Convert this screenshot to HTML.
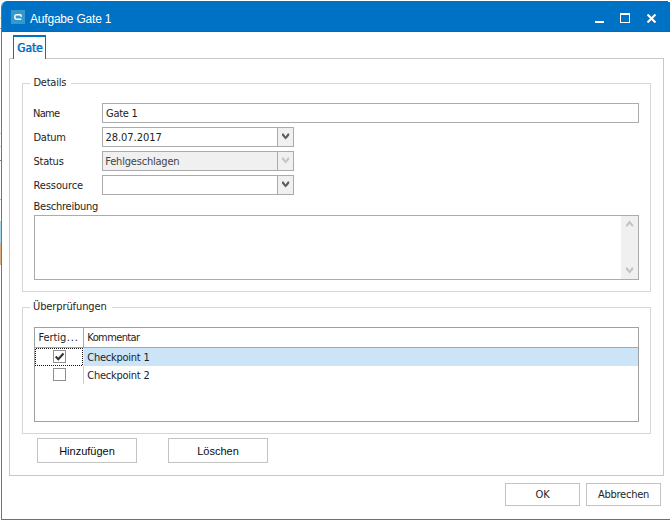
<!DOCTYPE html>
<html lang="de">
<head>
<meta charset="utf-8">
<title>Aufgabe Gate 1</title>
<style>
html,body{margin:0;padding:0;}
body{width:670px;height:520px;overflow:hidden;background:#fff;position:relative;
  font-family:"DejaVu Sans Condensed","Liberation Sans",sans-serif;font-size:11px;color:#1e1e1e;letter-spacing:-0.25px;}
*{box-sizing:border-box;}
.abs{position:absolute;}
.win{position:absolute;left:1px;top:1px;width:680px;height:519px;border-left:1px solid #4580b9;border-bottom:1px solid #3f7cb8;border-top-left-radius:6px;overflow:hidden;background:#fff;}
.title{position:absolute;left:-1px;top:0;width:681px;height:31px;background:#0072c6;border-bottom:1px solid #006bbd;}
.title .cap{font-family:"Liberation Sans",sans-serif;position:absolute;left:29px;top:10px;font-size:12px;line-height:16px;color:#fff;white-space:nowrap;letter-spacing:-0.2px;}
.ico{position:absolute;left:10px;top:9px;width:14px;height:14px;background:#3399cc;}
.t{position:absolute;white-space:nowrap;line-height:13px;height:13px;}
.panel{position:absolute;left:9px;top:58px;width:655px;height:418px;border:1px solid #c8c8c8;}
.tab{position:absolute;left:13px;top:35px;width:33px;height:24px;border:1px solid #0072c6;border-top-width:2px;border-bottom:0;background:#fff;}
.tab span{position:absolute;left:3px;top:5px;line-height:13px;font-size:11.500px;color:#0072c6;text-shadow:0.8px 0 0 #0072c6;letter-spacing:0.15px;}
.grp{position:absolute;border:1px solid #d6d6d6;}
.leg{position:absolute;background:#fff;height:13px;line-height:13px;white-space:nowrap;}
.inp{position:absolute;border:1px solid #ababab;background:#fff;height:20px;}
.inp .v{position:absolute;left:3px;top:3px;line-height:13px;white-space:nowrap;}
.cmb .btn{position:absolute;right:0;top:0;width:16px;height:18px;border-left:1px solid #ababab;background:#f0f0f0;}
.cmb svg{position:absolute;left:4px;top:5px;}
.dis{background:#f0f0f0;}
.dis .v{color:#444;}
.focus{background:
  repeating-linear-gradient(90deg,transparent 0 1px,#111 1px 2px) 0 0/100% 1px no-repeat,
  repeating-linear-gradient(90deg,#111 0 1px,transparent 1px 2px) 0 100%/100% 1px no-repeat,
  repeating-linear-gradient(180deg,transparent 0 1px,#111 1px 2px) 0 0/1px 100% no-repeat,
  repeating-linear-gradient(180deg,#111 0 1px,transparent 1px 2px) 100% 0/1px 100% no-repeat;}
.btnb{position:absolute;border:1px solid #c3c3c3;background:#fff;text-align:center;}
</style>
</head>
<body>
<div class="win">
  <div class="title">
    <div class="ico"><svg width="14" height="14" viewBox="0 0 14 14"><path d="M10.2 6.8V5.9Q10.2 4.75 9 4.75H5.6Q3.8 4.75 3.8 6.9Q3.8 9.2 5.6 9.2H10.3" fill="none" stroke="#fff" stroke-width="1.5"/></svg></div>
    <div class="cap">Aufgabe Gate 1</div>
    <div class="abs" style="left:594px;top:20px;width:9px;height:2px;background:#fff"></div>
    <div class="abs" style="left:619px;top:12px;width:10px;height:10px;border:1px solid #fff;border-top-width:2px"></div>
    <svg class="abs" style="left:646px;top:13px" width="9" height="9" viewBox="0 0 9 9"><path d="M1.300 1.300L7.700 7.700M7.700 1.300L1.300 7.700" stroke="#fff" stroke-width="2.100" stroke-linecap="square" fill="none"/></svg>
  </div>
</div>
<div class="abs" style="left:668px;top:1px;width:2px;height:1px;background:#fff"></div>

<!-- slivers of the desktop behind the window, visible in pixel column 0 -->
<div class="abs" style="left:0;top:17px;width:1px;height:2px;background:#ffe48a"></div>
<div class="abs" style="left:0;top:28px;width:1px;height:1px;background:#9a9a9a"></div>
<div class="abs" style="left:0;top:133px;width:1px;height:1px;background:#cfcfcf"></div>
<div class="abs" style="left:0;top:146px;width:1px;height:1px;background:#cfcfcf"></div>
<div class="abs" style="left:0;top:160px;width:1px;height:1px;background:#7a7a7a"></div>
<div class="abs" style="left:0;top:199px;width:1px;height:1px;background:#b4b4b4"></div>
<div class="abs" style="left:0;top:221px;width:1px;height:22px;background:#a9d6ea"></div>
<div class="abs" style="left:0;top:243px;width:1px;height:22px;background:#dbb084"></div>
<div class="panel"></div>
<div class="tab"><span>Gate</span></div>

<!-- Details group -->
<div class="grp" style="left:22px;top:83px;width:629px;height:209px"></div>
<div class="leg" style="left:30px;top:76px;width:41px;padding-left:3.500px">Details</div>

<div class="t" style="left:33px;top:107px;letter-spacing:-0.7px">Name</div>
<div class="t" style="left:33.500px;top:131px">Datum</div>
<div class="t" style="left:33.500px;top:155px">Status</div>
<div class="t" style="left:33.500px;top:179px;letter-spacing:-0.1px">Ressource</div>
<div class="t" style="left:33.500px;top:200px">Beschreibung</div>

<div class="inp" style="left:102px;top:103px;width:537px"><span class="v">Gate 1</span></div>
<div class="inp cmb" style="left:102px;top:127px;width:192px"><span class="v" style="left:2.500px;letter-spacing:-0.05px">28.07.2017</span><div class="btn"><svg width="8" height="8" viewBox="0 0 8 8"><path d="M0 0.6H1.5L3.6 3.4L5.700 0.600H7.2V2.400L3.600 6.600L0 2.400Z" fill="#5c5c5c"/></svg></div></div>
<div class="inp cmb dis" style="left:102px;top:151px;width:192px"><span class="v" style="left:2.300px;letter-spacing:-0.2px">Fehlgeschlagen</span><div class="btn"><svg width="8" height="8" viewBox="0 0 8 8"><path d="M0 0.6H1.5L3.6 3.4L5.700 0.600H7.2V2.400L3.600 6.600L0 2.400Z" fill="#c6c6c6"/></svg></div></div>
<div class="inp cmb" style="left:102px;top:175px;width:192px"><div class="btn"><svg width="8" height="8" viewBox="0 0 8 8"><path d="M0 0.6H1.5L3.6 3.4L5.700 0.600H7.2V2.400L3.600 6.600L0 2.400Z" fill="#5c5c5c"/></svg></div></div>

<div class="inp" style="left:34px;top:215px;width:605px;height:65px">
  <div class="abs" style="right:0;top:0;width:17px;height:63px;background:#f0f0f0">
    <svg class="abs" style="left:4.500px;top:4px" width="8" height="8" viewBox="0 0 8 8"><path d="M0 6.600H1.500L3.600 3.800L5.700 6.600H7.200V4.800L3.600 0.600L0 4.800Z" fill="#c3c3c3"/></svg>
    <svg class="abs" style="left:4.500px;top:51px" width="8" height="8" viewBox="0 0 8 8"><path d="M0 0.600H1.500L3.600 3.400L5.700 0.600H7.200V2.400L3.600 6.600L0 2.400Z" fill="#c3c3c3"/></svg>
  </div>
</div>

<!-- Überprüfungen group -->
<div class="grp" style="left:22px;top:307px;width:629px;height:127px"></div>
<div class="leg" style="left:30px;top:300px;width:82px;padding-left:3px;letter-spacing:-0.1px">Überprüfungen</div>

<div class="abs" style="left:34px;top:327px;width:605px;height:95px;border:1px solid #a0a0a0;background:#fff">
  <div class="abs" style="left:0;top:19px;width:603px;height:1px;background:#a8a8a8"></div>
  <div class="abs" style="left:48px;top:0;width:1px;height:19px;background:#a8a8a8"></div>
  <div class="abs" style="left:48px;top:20px;width:1px;height:18px;background:#f0f0f0"></div>
  <div class="abs" style="left:48px;top:38px;width:1px;height:18px;background:#cdcdcd"></div>
  <div class="abs" style="left:49px;top:20px;width:554px;height:18px;background:#cce4f7"></div>
  <div class="abs focus" style="left:0;top:20px;width:48px;height:18px"></div>
  <div class="t" style="left:3.500px;top:3px;letter-spacing:-0.1px">Fertig<span style="letter-spacing:0.85px;margin-left:0.8px">...</span></div>
  <div class="t" style="left:52.300px;top:3px;letter-spacing:-0.6px">Kommentar</div>
  <div class="t" style="left:52.300px;top:23px">Checkpoint 1</div>
  <div class="t" style="left:52.300px;top:41px">Checkpoint 2</div>
  <div class="abs" style="left:18px;top:22px;width:13px;height:13px;border:1px solid #8e8f8f;background:#fff"><svg class="abs" style="left:0;top:0" width="11" height="11" viewBox="0 0 11 11"><path d="M1.700 5.500L4.300 8.300L9.500 2.500" fill="none" stroke="#333" stroke-width="2.100"/></svg></div>
  <div class="abs" style="left:18px;top:40px;width:13px;height:13px;border:1px solid #8e8f8f;background:#fff"></div>
</div>

<div class="btnb" style="left:37px;top:438px;width:100px;height:25px;line-height:24.500px;color:#0a0a0a;font-family:'Liberation Sans',sans-serif;letter-spacing:0">Hinzufügen</div>
<div class="btnb" style="left:168px;top:438px;width:100px;height:25px;line-height:24.500px;color:#0a0a0a;font-family:'Liberation Sans',sans-serif;letter-spacing:0">Löschen</div>
<div class="btnb" style="left:505px;top:483px;width:75px;height:23px;line-height:21px">OK</div>
<div class="btnb" style="left:586px;top:483px;width:75px;height:23px;line-height:21px">Abbrechen</div>
</body>
</html>
